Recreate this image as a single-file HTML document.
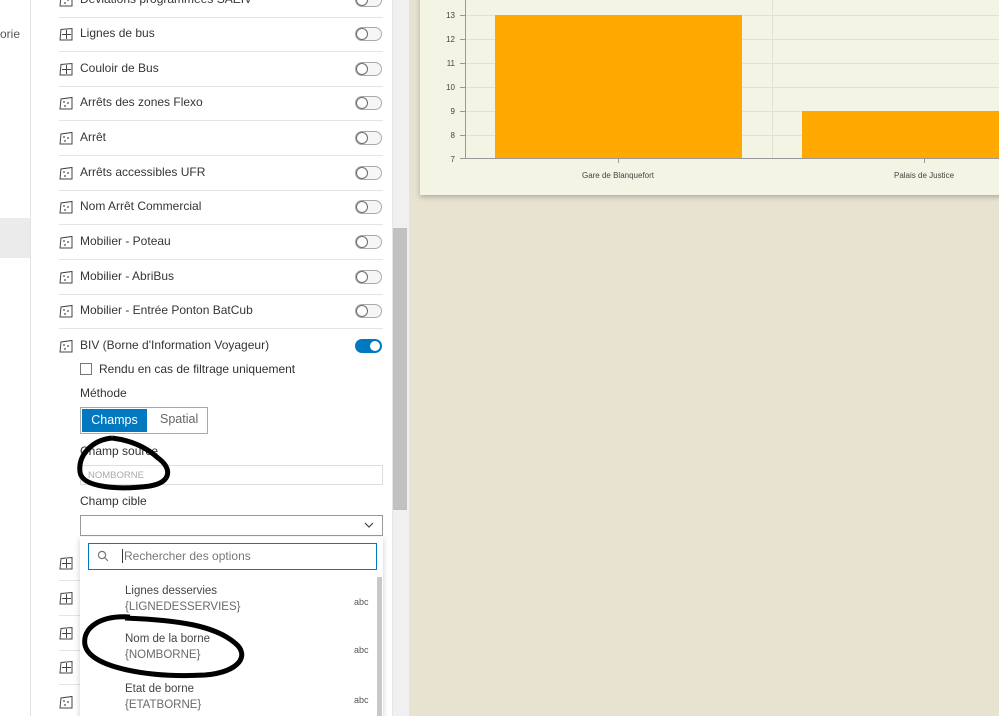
<!DOCTYPE html>
<html><head><meta charset="utf-8"><style>
*{margin:0;padding:0;box-sizing:border-box}
html,body{width:999px;height:716px;overflow:hidden}
body{position:relative;background:#e8e2d0;font-family:"Liberation Sans",sans-serif;color:#323232}
.abs{position:absolute}
.row{position:absolute;left:59px;width:324px;height:35px;border-bottom:1px solid #e4e4e4}
.row .t{position:absolute;left:21px;top:9px;font-size:12px;color:#353535}
.row svg{position:absolute;left:0;top:10px}
.tg{position:absolute;left:296px;top:10px;width:27px;height:14px;border:1px solid #aaa;border-radius:8px;background:#f6f6f6}
.tg:after{content:"";position:absolute;left:0;top:0;width:12px;height:12px;border-radius:50%;border:1.5px solid #6a6a6a;background:#fff;box-sizing:border-box}
.tg.on{background:#0079c1;border-color:#0079c1}
.tg.on:after{left:13px;border-color:#0079c1}
.it{position:absolute;left:125px;font-size:11.5px;color:#444}
.it span{display:block;color:#6a6a6a;margin-top:4px}
.abc{position:absolute;left:354px;font-size:9px;color:#555}
</style></head><body>
<div class="abs" style="left:0;top:0;width:31px;height:716px;background:#fff;border-right:1px solid #e3e3e3"></div>
<div class="abs" style="left:0;top:218px;width:30px;height:40px;background:#ebebeb"></div>
<div class="abs" style="left:0;top:27px;font-size:12px;color:#555">orie</div>
<div class="abs" style="left:31px;top:0;width:361px;height:716px;background:#fff"></div>
<div class="abs" style="left:392px;top:0;width:17px;height:716px;background:#f0f0f0;border-left:1px solid #e5e5e5"></div>
<div class="abs" style="left:393px;top:228px;width:14px;height:282px;background:#c1c1c1"></div>

<svg width="0" height="0" style="position:absolute"><defs>
<g id="ic"><path d="M1 13 L2 3 L13 1.5 L13 13 Z" fill="none" stroke="#444" stroke-width="1"/><circle cx="5" cy="6" r=".9" fill="#444"/><circle cx="9" cy="7" r=".9" fill="#444"/><circle cx="6" cy="10" r=".9" fill="#444"/></g>
<g id="ic2"><path d="M1 13 L2 2.5 L13 1.5 L13 13 Z M7.5 3 V12 M3 7.5 H12" fill="none" stroke="#444" stroke-width="1"/></g>
</defs></svg>

<div class="row" style="top:-17px"><svg width="14" height="14"><use href="#ic"/></svg><div class="t">Déviations programmées SAEIV</div><div class="tg"></div></div>
<div class="row" style="top:17px"><svg width="14" height="14"><use href="#ic2"/></svg><div class="t">Lignes de bus</div><div class="tg"></div></div>
<div class="row" style="top:52px"><svg width="14" height="14"><use href="#ic2"/></svg><div class="t">Couloir de Bus</div><div class="tg"></div></div>
<div class="row" style="top:86px"><svg width="14" height="14"><use href="#ic"/></svg><div class="t">Arrêts des zones Flexo</div><div class="tg"></div></div>
<div class="row" style="top:121px"><svg width="14" height="14"><use href="#ic"/></svg><div class="t">Arrêt</div><div class="tg"></div></div>
<div class="row" style="top:156px"><svg width="14" height="14"><use href="#ic"/></svg><div class="t">Arrêts accessibles UFR</div><div class="tg"></div></div>
<div class="row" style="top:190px"><svg width="14" height="14"><use href="#ic"/></svg><div class="t">Nom Arrêt Commercial</div><div class="tg"></div></div>
<div class="row" style="top:225px"><svg width="14" height="14"><use href="#ic"/></svg><div class="t">Mobilier - Poteau</div><div class="tg"></div></div>
<div class="row" style="top:260px"><svg width="14" height="14"><use href="#ic"/></svg><div class="t">Mobilier - AbriBus</div><div class="tg"></div></div>
<div class="row" style="top:294px"><svg width="14" height="14"><use href="#ic"/></svg><div class="t">Mobilier - Entrée Ponton BatCub</div><div class="tg"></div></div>
<div class="row" style="top:329px;height:252px"><svg width="14" height="14"><use href="#ic"/></svg><div class="t">BIV (Borne d'Information Voyageur)</div><div class="tg on"></div></div>

<div class="abs" style="left:80px;top:363px;width:12px;height:12px;border:1px solid #777"></div>
<div class="abs" style="left:99px;top:362px;font-size:12px">Rendu en cas de filtrage uniquement</div>
<div class="abs" style="left:80px;top:386px;font-size:12px">Méthode</div>
<div class="abs" style="left:80px;top:407px;width:128px;height:27px;border:1px solid #aaa;background:#fff"></div>
<div class="abs" style="left:82px;top:409px;width:65px;height:23px;background:#0079c1;color:#fff;font-size:12.5px;text-align:center;line-height:22px">Champs</div>
<div class="abs" style="left:160px;top:412px;font-size:12.5px;color:#666">Spatial</div>
<div class="abs" style="left:80px;top:444px;font-size:12px">Champ source</div>
<div class="abs" style="left:80px;top:465px;width:303px;height:20px;border:1px solid #ddd;font-size:9.5px;color:#aaa;padding:4px 7px">NOMBORNE</div>
<div class="abs" style="left:80px;top:494px;font-size:12px">Champ cible</div>
<div class="abs" style="left:80px;top:515px;width:303px;height:21px;border:1px solid #999;background:#fff"></div>
<svg class="abs" style="left:364px;top:521px" width="10" height="8"><path d="M1 2 L5 6 L9 2" fill="none" stroke="#444" stroke-width="1.2"/></svg>

<div class="row" style="top:546px"><svg width="14" height="14"><use href="#ic2"/></svg></div>
<div class="row" style="top:581px"><svg width="14" height="14"><use href="#ic2"/></svg></div>
<div class="row" style="top:616px"><svg width="14" height="14"><use href="#ic2"/></svg></div>
<div class="row" style="top:650px"><svg width="14" height="14"><use href="#ic2"/></svg></div>
<div class="row" style="top:685px"><svg width="14" height="14"><use href="#ic"/></svg></div>

<div class="abs" style="left:80px;top:537px;width:303px;height:185px;background:#fff;box-shadow:0 2px 6px rgba(0,0,0,.2)"></div>
<div class="abs" style="left:88px;top:543px;width:289px;height:27px;border:1.5px solid #0079c1"></div>
<svg class="abs" style="left:97px;top:550px" width="12" height="12"><circle cx="5" cy="5" r="3.6" fill="none" stroke="#777" stroke-width="1.2"/><path d="M7.6 7.6 L11 11" stroke="#777" stroke-width="1.2"/></svg>
<div class="abs" style="left:122px;top:549px;font-size:12px;color:#777;border-left:1px solid #333;padding-left:1px">Rechercher des options</div>
<div class="abs" style="left:377px;top:577px;width:5px;height:145px;background:#c8c8c8"></div>
<div class="it" style="top:585px">Lignes desservies<span>{LIGNEDESSERVIES}</span></div>
<div class="abc" style="top:597px">abc</div>
<div class="it" style="top:633px">Nom de la borne<span>{NOMBORNE}</span></div>
<div class="abc" style="top:645px">abc</div>
<div class="it" style="top:683px">Etat de borne<span>{ETATBORNE}</span></div>
<div class="abc" style="top:695px">abc</div>

<!-- chart -->
<div class="abs" style="left:420px;top:-5px;width:590px;height:200px;background:#f4f4e4;box-shadow:0 2px 5px rgba(0,0,0,.25)"></div>
<svg class="abs" style="left:420px;top:0" width="579" height="195">
<g stroke="#e2e2d2" stroke-width="1">
<line x1="45" y1="15.5" x2="579" y2="15.5"/><line x1="45" y1="39.5" x2="579" y2="39.5"/><line x1="45" y1="63.5" x2="579" y2="63.5"/><line x1="45" y1="87.5" x2="579" y2="87.5"/><line x1="45" y1="111.5" x2="579" y2="111.5"/><line x1="45" y1="135.5" x2="579" y2="135.5"/>
<line x1="352.5" y1="0" x2="352.5" y2="158"/></g>
<line x1="45.5" y1="0" x2="45.5" y2="159" stroke="#999"/>
<line x1="40" y1="158.5" x2="579" y2="158.5" stroke="#999"/>
<g stroke="#999"><line x1="40" y1="15.5" x2="45" y2="15.5"/><line x1="40" y1="39.5" x2="45" y2="39.5"/><line x1="40" y1="63.5" x2="45" y2="63.5"/><line x1="40" y1="87.5" x2="45" y2="87.5"/><line x1="40" y1="111.5" x2="45" y2="111.5"/><line x1="40" y1="135.5" x2="45" y2="135.5"/><line x1="198.5" y1="158" x2="198.5" y2="163"/><line x1="504.5" y1="158" x2="504.5" y2="163"/></g>
<rect x="75" y="15" width="247" height="143" fill="#ffa800"/>
<rect x="382" y="111" width="200" height="47" fill="#ffa800"/>
<g font-size="8" fill="#444" text-anchor="end" font-family="Liberation Sans"><text x="35" y="18">13</text><text x="35" y="42">12</text><text x="35" y="66">11</text><text x="35" y="90">10</text><text x="35" y="114">9</text><text x="35" y="138">8</text><text x="35" y="162">7</text></g>
<g font-size="8" fill="#444" text-anchor="middle" font-family="Liberation Sans"><text x="198" y="178">Gare de Blanquefort</text><text x="504" y="178">Palais de Justice</text></g>
</svg>

<!-- hand-drawn circles -->
<svg class="abs" style="left:0;top:0" width="999" height="716">
<path d="M112 438 C92 440 78 455 80 472 C82 488 120 490 150 486 C172 482 172 468 158 458 C145 446 128 440 112 438" fill="none" stroke="#000" stroke-width="5"/>
<path d="M130 617 C100 615 82 628 85 645 C90 668 150 678 205 675 C240 672 250 655 235 643 C215 626 180 620 125 618" fill="none" stroke="#000" stroke-width="5"/>
</svg>
</body></html>
